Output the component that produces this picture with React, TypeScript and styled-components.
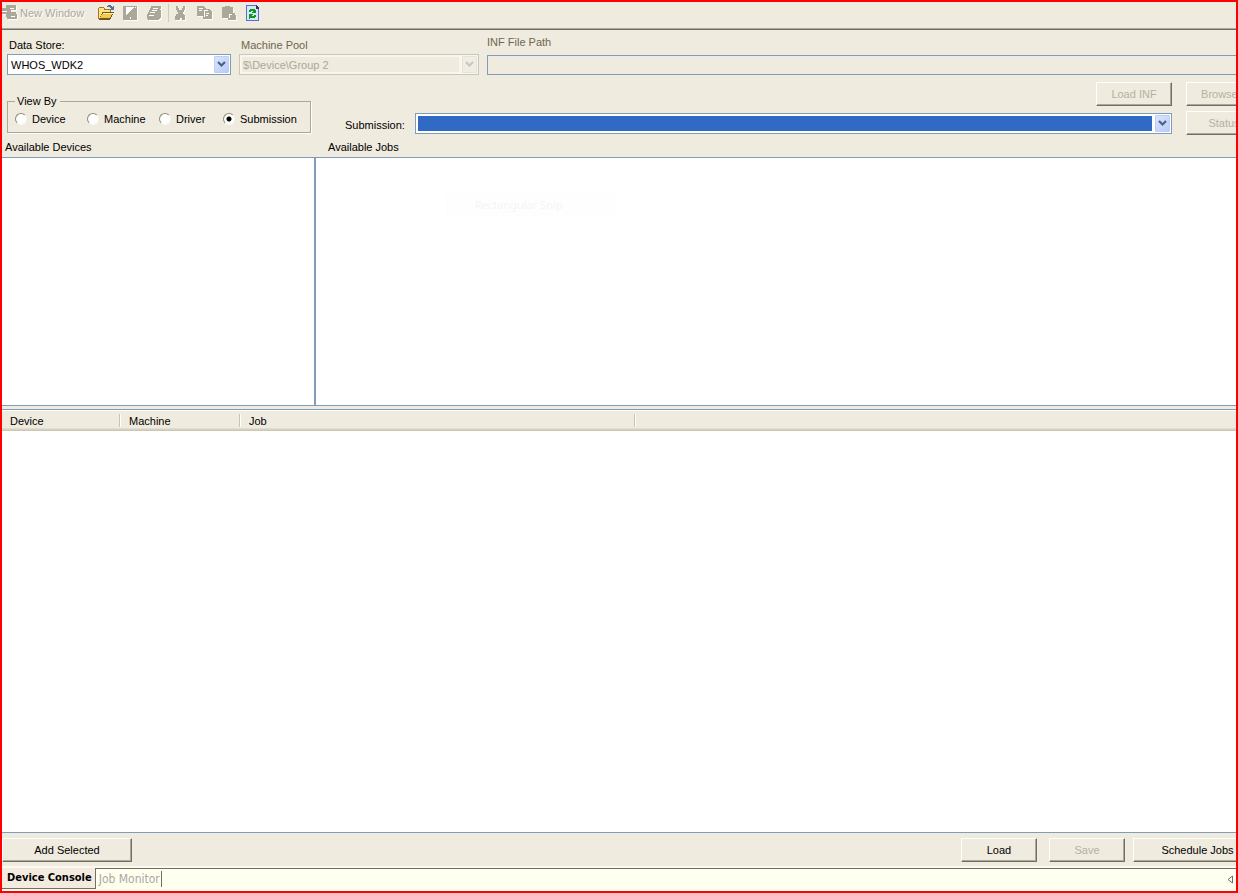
import React from "react";
import styled, { createGlobalStyle, css } from "styled-components";

const face = "#efebde";
const edge = "#7f9db9";
const shadow = "#aca899";
const dark = "#716f64";
const ui = `"Liberation Sans", Arial, sans-serif`;
const tahoma = `"DejaVu Sans Condensed", "Noto Sans", sans-serif`;

const GlobalStyle = createGlobalStyle`
  * { box-sizing: border-box; }
  body { margin: 0; background: ${face}; }
  button, input, select { font: inherit; margin: 0; }
`;

const Frame = styled.div`
  display: flex;
  flex-direction: column;
  min-height: 100vh;
  border: 2px solid #ff0000;
  background: ${face};
  color: #000;
  font: 11px/14px ${ui};
  overflow: hidden;
`;

const Toolbar = styled.div`
  display: flex;
  align-items: center;
  height: 28px;
  padding-bottom: 5px;
  border-bottom: 1px solid ${dark};
  box-shadow: inset 0 -1px 0 ${shadow};
`;

const ToolButton = styled.button<{ $wide?: boolean }>`
  display: flex;
  align-items: center;
  justify-content: ${(p) => (p.$wide ? "flex-start" : "center")};
  gap: 2px;
  width: ${(p) => (p.$wide ? "92px" : "24px")};
  height: 22px;
  padding: 0;
  border: 0;
  background: none;
  color: ${shadow};
  text-shadow: 1px 1px 0 #fff;
  white-space: nowrap;
`;

const Separator = styled.span`
  width: 1px;
  height: 18px;
  margin: 0 0 0 2px;
  background: #d0ccb4;
`;

const Glyph = styled.svg`
  display: block;
  flex: none;
  width: 16px;
  height: 16px;
`;

const Filters = styled.div`
  display: flex;
  flex-direction: column;
  width: calc(100% + 26px);
  padding: 5px 0 0 5px;
`;

const FieldRow = styled.div`
  display: flex;
  align-items: flex-end;
  gap: 8px;
`;

const Field = styled.div<{ $width?: number; $gap?: number }>`
  display: flex;
  flex-direction: column;
  gap: ${(p) => p.$gap ?? 2}px;
  flex: ${(p) => (p.$width ? `0 0 ${p.$width}px` : "1")};
`;

const Label = styled.label<{ $muted?: boolean }>`
  padding-left: 2px;
  color: ${(p) => (p.$muted ? "#6e6650" : "#000")};
  white-space: nowrap;
`;

const FlushLabel = styled(Label)`
  padding-left: 0;
`;

const Combo = styled.div<{ $disabled?: boolean }>`
  display: flex;
  position: relative;
  flex: 1 0 auto;
  height: 21px;
  padding: 2px;
  border: 1px solid ${(p) => (p.$disabled ? "#c9c7ba" : edge)};
  background: ${(p) => (p.$disabled ? "#f8f6ef" : "#fff")};
`;

const Select = styled.select<{ $selected?: boolean }>`
  appearance: none;
  flex: 1;
  min-width: 0;
  margin-right: 17px;
  padding: 0 1px;
  border: 0;
  border-radius: 0;
  outline: 0;
  background: ${(p) => (p.$selected ? "#316ac5" : "#fff")};
  color: #000;
  &:disabled {
    background: ${face};
    color: ${shadow};
    opacity: 1;
  }
`;

const Arrow = styled.span<{ $disabled?: boolean }>`
  position: absolute;
  top: 1px;
  right: 1px;
  display: flex;
  align-items: center;
  justify-content: center;
  width: 15px;
  height: 17px;
  border-radius: 1px;
  pointer-events: none;
  color: ${(p) => (p.$disabled ? "#c9c7ba" : "#4d6185")};
  background: ${(p) =>
    p.$disabled ? "#efede4" : "linear-gradient(135deg, #dbe5fe, #b9cbf8)"};
  border: 1px solid ${(p) => (p.$disabled ? "#e6e3d8" : "#bccdf6")};
`;

const PathInput = styled.input`
  width: 100%;
  height: 20px;
  padding: 0 3px;
  border: 1px solid ${edge};
  background: ${face};
`;

const ControlRow = styled.div`
  display: flex;
  align-items: flex-start;
  padding-top: 7px;
`;

const ViewBy = styled.fieldset`
  display: flex;
  align-items: center;
  width: 304px;
  flex: none;
  height: 39px;
  margin: 12px 0 0;
  padding: 0 0 3px 7px;
  border: 1px solid ${shadow};
  box-shadow: 1px 1px 0 #fff;
  legend {
    padding: 0 3px 0 2px;
    margin-left: 0;
  }
`;

const Choice = styled.label<{ $width: number }>`
  display: flex;
  align-items: center;
  gap: 5px;
  width: ${(p) => p.$width}px;
  white-space: nowrap;
`;

const Radio = styled.input`
  appearance: none;
  flex: none;
  width: 12px;
  height: 12px;
  border: 1px solid;
  border-color: #8c8a7e #f8f7f2 #f8f7f2 #8c8a7e;
  border-radius: 50%;
  background: #fff;
  &:checked {
    background: radial-gradient(circle, #000 2px, #fff 3px);
  }
`;

const SubmissionArea = styled.div`
  display: flex;
  flex-direction: column;
  align-items: stretch;
  gap: 7px;
  flex: 1;
  padding-left: 34px;
`;

const SubmissionLine = styled.div`
  display: flex;
  align-items: center;
  gap: 9px;
  label {
    width: 61px;
    padding: 2px 0 0;
  }
`;

const SideButtons = styled.div`
  display: flex;
  flex-direction: column;
  gap: 5px;
  margin-left: 14px;
`;

const Button = styled.button<{ $width?: number; $end?: boolean }>`
  flex: none;
  width: ${(p) => p.$width ?? 76}px;
  height: 24px;
  padding: 0 0 1px;
  border: 1px solid;
  border-color: #fff ${dark} ${dark} #fff;
  box-shadow: inset -1px -1px 0 ${shadow};
  background: ${face};
  color: #000;
  white-space: nowrap;
  ${(p) => p.$end && css`align-self: flex-end;`}
  &:disabled {
    color: #b5b1a2;
  }
`;

const Captions = styled.div`
  display: flex;
  height: 23px;
  padding-top: 5px;
  border-bottom: 1px solid ${edge};
  h2 {
    margin: 0;
    padding-left: 3px;
    font: inherit;
  }
  h2:first-child {
    width: 323px;
  }
`;

const Panes = styled.div`
  display: flex;
  flex: 247 0 0;
  border-bottom: 1px solid ${edge};
`;

const DevicePane = styled.section`
  flex: 0 0 314px;
  border-right: 2px solid ${edge};
  background: #fff;
`;

const JobPane = styled.section`
  position: relative;
  flex: 1;
  background: #fff;
`;

const GhostItem = styled.span`
  position: absolute;
  left: 130px;
  top: 35px;
  width: 170px;
  padding: 4px 28px;
  border: 1px solid #fdfdfd;
  background: #fefefe;
  color: #f4f5f5;
  font: 11px/14px "Noto Sans", sans-serif;
  white-space: nowrap;
`;

const QueuePane = styled.section`
  flex: 423 0 0;
  margin-top: 3px;
  border-top: 1px solid ${edge};
  border-bottom: 1px solid ${edge};
  background: #fff;
`;

const Queue = styled.table`
  width: 100%;
  table-layout: fixed;
  border-collapse: collapse;
  thead {
    background: linear-gradient(#fff 0 1px, ${face} 1px 18px, #e2decd 18px 19px, #d6d2c2 19px 20px, #cbc7b8 20px);
  }
`;

const HeadCell = styled.th<{ $width?: number; $last?: boolean }>`
  width: ${(p) => (p.$width ? `${p.$width}px` : "auto")};
  height: 21px;
  padding: 1px 8px 0;
  font-weight: 400;
  text-align: left;
  background: ${(p) =>
    p.$last
      ? "none"
      : `linear-gradient(90deg, #c7c5b2 50%, #fff 50%) right 4px / 2px 13px no-repeat`};
`;

const Actions = styled.div`
  display: flex;
  align-items: center;
  justify-content: space-between;
  width: calc(100% + 26px);
  height: 33px;
  padding-top: 1px;
`;

const ActionGroup = styled.div<{ $gap: number }>`
  display: flex;
  gap: ${(p) => p.$gap}px;
`;

const Tabs = styled.nav`
  display: flex;
  align-items: flex-start;
  height: 25px;
  border-top: 2px solid #fbf9f2;
  background: linear-gradient(${dark} 0 1px, #fffff0 1px);
  font: 11px/14px ${tahoma};
`;

const Tab = styled.button<{ $active?: boolean }>`
  height: ${(p) => (p.$active ? "21px" : "16px")};
  margin-top: ${(p) => (p.$active ? "0" : "3px")};
  padding: ${(p) => (p.$active ? "0 3px 0 5px" : "0 1px 0 3px")};
  border: 0 solid ${dark};
  border-right-width: 1px;
  border-bottom-width: ${(p) => (p.$active ? "1px" : "0")};
  background: ${(p) => (p.$active ? "#f3ebe0" : "none")};
  color: ${(p) => (p.$active ? "#000" : "#aca8a0")};
  font-size: ${(p) => (p.$active ? 11 : 12)}px;
  font-weight: ${(p) => (p.$active ? 700 : 400)};
  white-space: nowrap;
`;

const ScrollButton = styled.button`
  align-self: center;
  margin-left: auto;
  padding: 0 3px 0 0;
  border: 0;
  background: none;
  svg {
    display: block;
  }
`;

function Chevron() {
  return (
    <svg width="9" height="7" viewBox="0 0 9 7" aria-hidden="true">
      <path d="M1 1l3.5 3.5L8 1" fill="none" stroke="currentColor" strokeWidth="2.2" />
    </svg>
  );
}

function Icon({ children }: { children: React.ReactNode }) {
  return (
    <Glyph viewBox="0 0 16 16" shapeRendering="crispEdges" aria-hidden="true">
      {children}
    </Glyph>
  );
}

function Embossed({ d, cut }: { d: string; cut?: string }) {
  return (
    <Icon>
      <path d={d} fill="#fff" transform="translate(1 1)" />
      <path d={d} fill={shadow} />
      {cut && <path d={cut} fill="#fff" />}
    </Icon>
  );
}

function FolderIcon() {
  return (
    <Icon>
      <path d="M0 3h1V2h5v1h1v1h6v3h2v2h-1v2h-1v2h-1v1H0z" fill="#a8771c" />
      <path d="M1 3h5v2h6v2H4v2H3v2H2v2H1z" fill="#fbe38a" />
      <path d="M5 7h11v1h-1v2h-1v2h-1v2h-1v1H1v-1h1v-2h1v-2h1V8h1z" fill="#6d5720" />
      <path d="M5 8h10l-3 5H2z" fill="#f8c84a" />
      <path d="M5 8h10v1H5z" fill="#fff0a8" />
      <path d="M9 1h1V0h3v1h1v1h1V1h1v4h-4V4h1V3h-1V2H9z" fill="#51709f" />
    </Icon>
  );
}

function RefreshIcon() {
  return (
    <Icon>
      <path d="M1 0h11v1h1v1h1v14H1z" fill="#5a70c4" />
      <path d="M2 1h9v3h2v11H2z" fill="#d6e6ff" />
      <path d="M11 0h1v1h1v1h1v2h-3z" fill="#26386f" />
      <path d="M4 5h1V4h5v1h1v3H7V7h1V6H6v1H4z" fill="#0b9b18" />
      <path d="M4 9h4v1H7v1h2v-1h2v2h-1v1H5v1H4z" fill="#0b9b18" />
    </Icon>
  );
}

const shapes = {
  window: "M4 0h10v5H9v2h5v2h1v5H5v-2H4V9H0V3h4z",
  save: "M1 1h14v14H1z",
  print: "M5 1h10v3h-1v1h1v8h-1v1h-1v1H2v-1H1V9h1V7h1V5h1V3h1z",
  cut: "M3 1h2v2h1v2h3V3h1V1h2v4h-1v2h-1v2h1v1h1v5H9v-2H7v2H2v-4h1V9h2V7H4V5H3z",
  copy: "M0 1h7v1h1v1h1v1h4v1h1v1h1v8H6v-3H0z",
  paste: "M1 2h3V1h5v1h3v6h2v2h1v5H7v-2H1z",
};

const views = [
  { name: "Device", width: 72 },
  { name: "Machine", width: 72 },
  { name: "Driver", width: 64 },
  { name: "Submission", width: 80 },
];

export default function App() {
  return (
    <>
      <GlobalStyle />
      <Frame>
        <Toolbar role="toolbar" aria-label="Console">
          <ToolButton $wide disabled>
            <Embossed d={shapes.window} cut="M8 3h4v1H8zM0 6h5v1H0zM9 11h4v1H9z" />
            New Window
          </ToolButton>
          <ToolButton aria-label="Open"><FolderIcon /></ToolButton>
          <ToolButton aria-label="Save file" disabled>
            <Embossed d={shapes.save} cut="M4 2h8v1h-1v1h-1v1H9v1H8v1H7v1H6v1H5v1H4zM13 2h1v1h-1zM8 12h1v2H8z" />
          </ToolButton>
          <ToolButton aria-label="Print" disabled>
            <Embossed d={shapes.print} cut="M7 3h5v1H7zM6 5h5v1H6zM4 7h5v1H4zM3 10h5v1H3z" />
          </ToolButton>
          <Separator />
          <ToolButton aria-label="Cut" disabled>
            <Embossed d={shapes.cut} />
          </ToolButton>
          <ToolButton aria-label="Copy" disabled>
            <Embossed d={shapes.copy} cut="M2 3h4v1H2zM2 5h3v1H2zM7 5h4v1H8v6H7zM9 8h3v1H9zM9 10h2v1H9z" />
          </ToolButton>
          <ToolButton aria-label="Paste" disabled>
            <Embossed d={shapes.paste} cut="M8 9h3v1H8zM8 10h1v3H8z" />
          </ToolButton>
          <ToolButton aria-label="Refresh"><RefreshIcon /></ToolButton>
        </Toolbar>

        <Filters>
          <FieldRow>
            <Field $width={224}>
              <Label htmlFor="store">Data Store:</Label>
              <Combo>
                <Select id="store"><option>WHOS_WDK2</option></Select>
                <Arrow><Chevron /></Arrow>
              </Combo>
            </Field>
            <Field $width={240}>
              <Label htmlFor="pool" $muted>Machine Pool</Label>
              <Combo $disabled>
                <Select id="pool" disabled><option>$\Device\Group 2</option></Select>
                <Arrow $disabled><Chevron /></Arrow>
              </Combo>
            </Field>
            <Field $gap={6}>
              <FlushLabel htmlFor="inf" $muted>INF File Path</FlushLabel>
              <PathInput id="inf" readOnly />
            </Field>
          </FieldRow>

          <ControlRow>
            <ViewBy>
              <legend>View By</legend>
              {views.map(({ name, width }) => (
                <Choice key={name} $width={width}>
                  <Radio type="radio" name="view" defaultChecked={name === "Submission"} />
                  {name}
                </Choice>
              ))}
            </ViewBy>
            <SubmissionArea>
              <Button $end disabled>Load INF</Button>
              <SubmissionLine>
                <Label htmlFor="submission">Submission:</Label>
                <Combo>
                  <Select id="submission" $selected><option></option></Select>
                  <Arrow><Chevron /></Arrow>
                </Combo>
              </SubmissionLine>
            </SubmissionArea>
            <SideButtons>
              <Button disabled>Browse...</Button>
              <Button disabled>Status</Button>
            </SideButtons>
          </ControlRow>
        </Filters>

        <Captions>
          <h2>Available Devices</h2>
          <h2>Available Jobs</h2>
        </Captions>
        <Panes>
          <DevicePane aria-label="Available Devices" />
          <JobPane aria-label="Available Jobs">
            <GhostItem>Rectangular Snip</GhostItem>
          </JobPane>
        </Panes>

        <QueuePane>
          <Queue>
            <thead>
              <tr>
                <HeadCell $width={119}>Device</HeadCell>
                <HeadCell $width={120}>Machine</HeadCell>
                <HeadCell $width={395}>Job</HeadCell>
                <HeadCell $last />
              </tr>
            </thead>
          </Queue>
        </QueuePane>

        <Actions>
          <Button $width={130}>Add Selected</Button>
          <ActionGroup $gap={8}>
            <ActionGroup $gap={12}>
              <Button>Load</Button>
              <Button disabled>Save</Button>
            </ActionGroup>
            <Button $width={129}>Schedule Jobs</Button>
          </ActionGroup>
        </Actions>

        <Tabs aria-label="Views">
          <Tab $active>Device Console</Tab>
          <Tab>Job Monitor</Tab>
          <ScrollButton aria-label="Scroll tabs left">
            <svg width="6" height="9" viewBox="0 0 6 9" aria-hidden="true">
              <path d="M5.5 1v7L1 4.500z" fill="none" stroke="#716f64" />
            </svg>
          </ScrollButton>
        </Tabs>
      </Frame>
    </>
  );
}
